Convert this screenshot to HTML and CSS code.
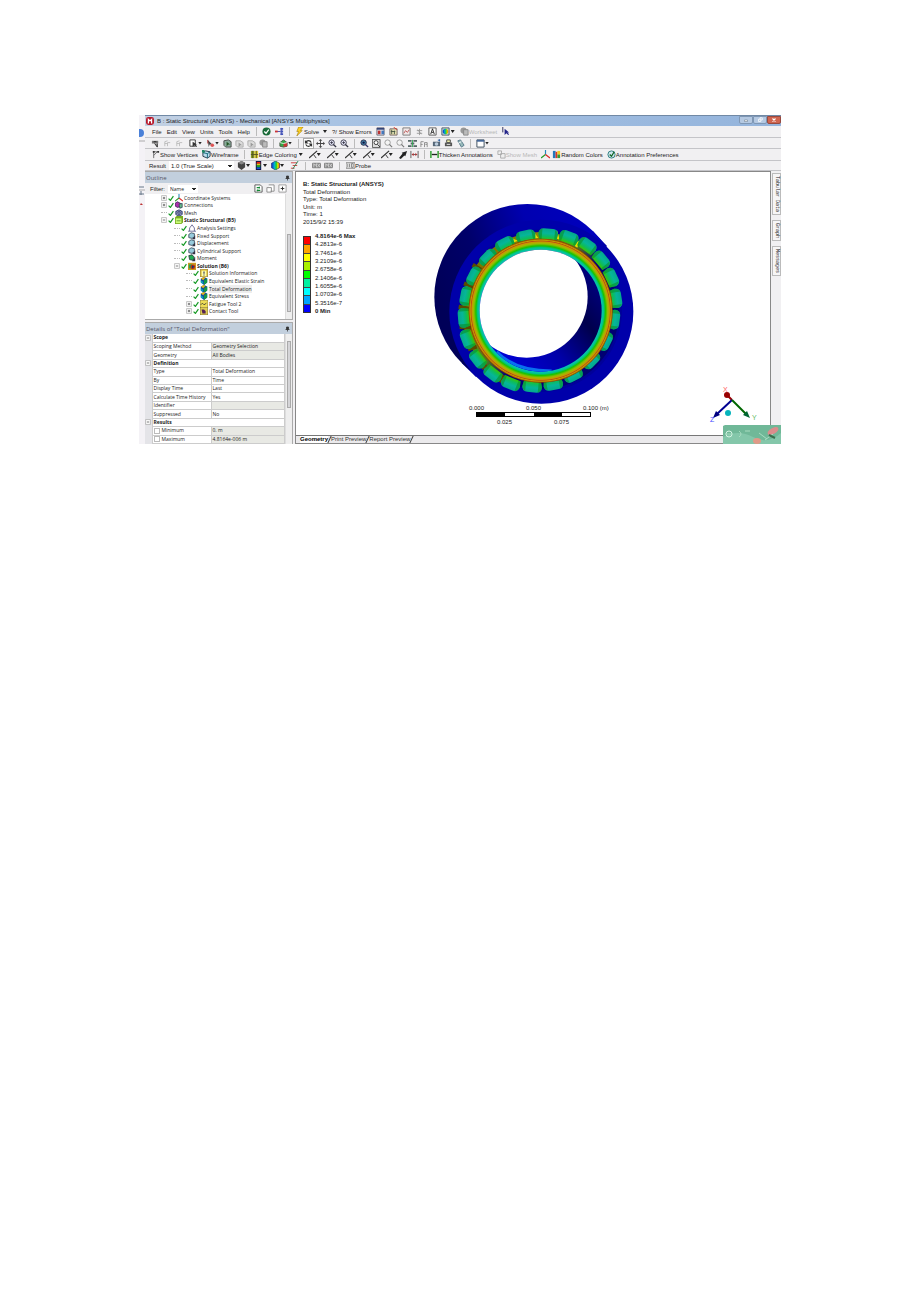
FILE: index.html
```html
<!DOCTYPE html>
<html lang="en">
<head>
<meta charset="utf-8">
<title>B : Static Structural (ANSYS) - Mechanical [ANSYS Multiphysics]</title>
<link rel="stylesheet" href="styles.css">
</head>
<body>
<svg class="defs" aria-hidden="true">
  <defs>
    <linearGradient id="rainbow" x1="0" x2="1"><stop offset="0" stop-color="#12c"/><stop offset=".4" stop-color="#0bc"/><stop offset=".6" stop-color="#2c2"/><stop offset=".8" stop-color="#ee0"/><stop offset="1" stop-color="#e20"/></linearGradient>
    <symbol id="i-tag" viewBox="0 0 10 10"><path d="M1 2h7v3H1z" fill="#777"/><path d="M3 3h3M4 5l3 4V5" stroke="#222" fill="#999"/></symbol>
    <symbol id="i-dim" viewBox="0 0 10 10"><path d="M2 8V3l3-1M5 8V4h3M2 5h3" stroke="#bbb" fill="none"/></symbol>
    <symbol id="i-select" viewBox="0 0 10 10"><path d="M1 1h6v7H1z" fill="#fff" stroke="#333"/><path d="M4 3v6l2-2 2 2 1-1-2-2h2z" fill="#333"/></symbol>
    <symbol id="i-pick" viewBox="0 0 10 10"><path d="M2 1l5 5-3 0-1 3z" fill="#444"/><circle cx="7" cy="7" r="2" fill="#d55"/><path d="M2 1v4" stroke="#a22"/></symbol>
    <symbol id="i-body" viewBox="0 0 10 10"><path d="M1 2l5-1 3 2v6H3L1 7z" fill="#8a9" stroke="#444"/><path d="M4 3v5l2-2h2z" fill="#252"/></symbol>
    <symbol id="i-body-off" viewBox="0 0 10 10"><path d="M1 2h5l3 2v5H3L1 7z" fill="#ddd" stroke="#aaa"/><path d="M4 4v5l2-2h2z" fill="#999"/></symbol>
    <symbol id="i-cubes" viewBox="0 0 10 10"><path d="M1 4l4-3 4 3v4L5 9 1 8z" fill="#3a4" stroke="#454"/><path d="M5 5l4-1v4L5 9z" fill="#c33"/><path d="M1 4l4 1 4-1" stroke="#eee" fill="none"/></symbol>
    <symbol id="i-rotate" viewBox="0 0 10 10"><path d="M8 4C7 1 3 1 2 4M2 6c1 3 5 3 6 0" fill="none" stroke="#333" stroke-width="1.3"/><path d="M1 1v4h4zM9 9V5H5z" fill="#333"/></symbol>
    <symbol id="i-pan" viewBox="0 0 10 10"><path d="M5 0l2 2H5.5v2.500H8V3l2 2-2 2V5.500H5.500V8H7l-2 2-2-2h1.500V5.500H2V7L0 5l2-2v1.500h2.500V2H3z" fill="#444"/></symbol>
    <symbol id="i-zoom" viewBox="0 0 10 10"><circle cx="4" cy="4" r="3" fill="#eef" stroke="#334"/><path d="M6 6l3 3" stroke="#334" stroke-width="1.500"/><path d="M2.500 4h3M4 2.500v3" stroke="#334"/></symbol>
    <symbol id="i-zoom-fit" viewBox="0 0 10 10"><circle cx="4" cy="4" r="3" fill="#48a" stroke="#224"/><circle cx="4" cy="4" r="1.300" fill="#114"/><path d="M6 6l3 3" stroke="#336" stroke-width="1.500"/></symbol>
    <symbol id="i-zoom-box" viewBox="0 0 10 10"><path d="M0 .5h9v9H.5V0" fill="#ddd" stroke="#555"/><circle cx="4.500" cy="4" r="2.200" fill="#fff" stroke="#333"/><path d="M6 6l3 3" stroke="#333"/></symbol>
    <symbol id="i-zoom-off" viewBox="0 0 10 10"><circle cx="4" cy="4" r="3" fill="#f4f4f4" stroke="#999"/><path d="M6 6l3 3" stroke="#777" stroke-width="1.300"/></symbol>
    <symbol id="i-iso" viewBox="0 0 10 10"><path d="M0 1h4v2H0zM6 1h4v2H6zM3 4h4v2H3zM0 7h4v2H0zM6 7h4v2H6z" fill="#566"/><path d="M5 1v8" stroke="#3a5"/></symbol>
    <symbol id="i-probe-f" viewBox="0 0 10 10"><path d="M1 9V3h3M1 6h2M5 9V4h3v2H6M8 6v3" stroke="#888" fill="none"/></symbol>
    <symbol id="i-camera" viewBox="0 0 10 10"><path d="M1 3h8v5H1z" fill="#567"/><circle cx="5" cy="5.500" r="2" fill="#bcd"/><path d="M6 1l3-1v3" fill="#36a"/></symbol>
    <symbol id="i-print" viewBox="0 0 10 10"><path d="M3 1h4v3H3z" fill="#efefaa" stroke="#444"/><path d="M1 4h8v4H1z" fill="#555"/><path d="M3 6h4" stroke="#eee"/></symbol>
    <symbol id="i-clip" viewBox="0 0 10 10"><path d="M2 2l3-1 4 6-3 2z" fill="#9bb" stroke="#578"/><path d="M2 5l4-2" stroke="#fff"/></symbol>
    <symbol id="i-window" viewBox="0 0 10 10"><path d="M1 1h8v8H1z" fill="#fff" stroke="#345"/><path d="M1 1h8v2H1z" fill="#469"/></symbol>
    <symbol id="i-ok" viewBox="0 0 10 10"><circle cx="5" cy="5" r="4.500" fill="#186a38"/><path d="M2.500 5l2 2 3-4" fill="none" stroke="#fff" stroke-width="1.400"/></symbol>
    <symbol id="i-link" viewBox="0 0 10 10"><path d="M0 5h6M7 1v8" stroke="#44a" fill="none"/><path d="M0 4h3v2H0z" fill="#c33"/><path d="M6 1h3v2H6zM6 4h3v2H6zM6 7h3v2H6z" fill="#45b"/></symbol>
    <symbol id="i-bolt" viewBox="0 0 10 10"><path d="M4 0h5L6 4h2L2 10l2-5H2z" fill="#ffd21c" stroke="#987000" stroke-width=".6"/></symbol>
    <symbol id="i-sheet" viewBox="0 0 10 10"><path d="M1 1h8v8H1z" fill="#e8e8f0" stroke="#667"/><path d="M1 1h8v2H1z" fill="#347"/><path d="M2 4h3v4H2z" fill="#b33"/><path d="M6 4h3v4H6z" fill="#47b"/></symbol>
    <symbol id="i-note" viewBox="0 0 10 10"><path d="M1 2h8v7H1z" fill="#e5e0b0" stroke="#766"/><path d="M2 5h5M3 3v5M6 4v4" stroke="#454"/><path d="M5 0l4 3" stroke="#d32"/></symbol>
    <symbol id="i-chart" viewBox="0 0 10 10"><path d="M1 1h8v8H1z" fill="#f0e8e8" stroke="#777"/><path d="M2 7l2-3 2 2 2-3" fill="none" stroke="#b55"/></symbol>
    <symbol id="i-gear" viewBox="0 0 10 10"><path d="M5 2v7M2 4h6M2 7h6M3 3l4 5" stroke="#999"/></symbol>
    <symbol id="i-a" viewBox="0 0 10 10"><path d="M1 1h8v8H1z" fill="#fff" stroke="#555"/><path d="M3 8l2-6 2 6M4 6h2" fill="none" stroke="#222"/></symbol>
    <symbol id="i-image" viewBox="0 0 10 10"><path d="M1 1h8v8H1z" fill="#cdd" stroke="#456"/><circle cx="5" cy="5" r="3" fill="url(#rainbow)"/></symbol>
    <symbol id="i-worksheet" viewBox="0 0 10 10"><circle cx="4" cy="4" r="3.500" fill="#999"/><path d="M4 3h5v6H4z" fill="#bbb" stroke="#888"/></symbol>
    <symbol id="i-cursor" viewBox="0 0 10 10"><path d="M2 0v6" stroke="#225"/><path d="M4 2v7l2-2 2 2 1-1-2-2h2z" fill="#228"/></symbol>
    <symbol id="i-vertex" viewBox="0 0 10 10"><path d="M3 9V2h5M3 6l4-4" fill="none" stroke="#666"/><path d="M2 1h2v2H2zM7 1h2v2H7z" fill="#333"/></symbol>
    <symbol id="i-wire" viewBox="0 0 10 10"><path d="M1 3l3-2 5 1v5L6 9 1 7z" fill="#bde" stroke="#234"/><path d="M1 3l5 1 3-2M6 4v5" fill="none" stroke="#167"/><path d="M0 0h3v3H0z" fill="#286"/></symbol>
    <symbol id="i-edge" viewBox="0 0 10 10"><path d="M1 1h4v8H1z" fill="#892"/><path d="M5 1h4v8H5z" fill="#dc3"/><path d="M1 5h8M3 1v8M7 1v8" stroke="#552"/></symbol>
    <symbol id="i-line" viewBox="0 0 10 10"><path d="M0 9L9 1" fill="none" stroke="#333" stroke-width="1.400"/><path d="M5 5l3 4" fill="none" stroke="#333"/></symbol>
    <symbol id="i-thick" viewBox="0 0 10 10"><path d="M0 9l4-5-1-1 6-2-2 6-1-1-4 4z" fill="#222"/></symbol>
    <symbol id="i-span" viewBox="0 0 10 10"><path d="M1 1v8M9 1v8M2 5h6" stroke="#555"/><path d="M2 5l2-2v4zM8 5L6 3v4z" fill="#b33"/></symbol>
    <symbol id="i-annot" viewBox="0 0 10 10"><path d="M1 1v8M9 1v8" stroke="#292" stroke-width="1.500"/><path d="M2 5h6" stroke="#222" stroke-width="1.500"/></symbol>
    <symbol id="i-mesh-off" viewBox="0 0 10 10"><path d="M1 1h4v4H1zM4 4h5v5H4z" fill="#eee" stroke="#aaa"/></symbol>
    <symbol id="i-axes" viewBox="0 0 10 10"><path d="M5 5V0" stroke="#28b" stroke-width="1.300"/><path d="M5 5L0 9" stroke="#292" stroke-width="1.300"/><path d="M5 5l5 4" stroke="#d22" stroke-width="1.300"/></symbol>
    <symbol id="i-random" viewBox="0 0 10 10"><path d="M1 1h3v8H1z" fill="#27b"/><path d="M4 2h2v7H4z" fill="#d32"/><path d="M6 1h3v4H6z" fill="#ec2"/><path d="M6 5h3v4H6z" fill="#393"/></symbol>
    <symbol id="i-pref" viewBox="0 0 10 10"><circle cx="5" cy="5" r="4" fill="#cfe6ef" stroke="#277"/><path d="M3 5l2 2 3-5" fill="none" stroke="#162" stroke-width="1.400"/></symbol>
    <symbol id="i-cube" viewBox="0 0 10 10"><path d="M5 0l4 2v5L5 10 1 7V2z" fill="#444"/><path d="M5 0l4 2-4 2-4-2z" fill="#888"/></symbol>
    <symbol id="i-bands" viewBox="0 0 10 10"><path d="M2 0h6v10H2z" fill="#114"/><path d="M3 1h4v2H3z" fill="#e21"/><path d="M3 3h4v2H3z" fill="#dc1"/><path d="M3 5h4v2H3z" fill="#1a3"/><path d="M3 7h4v2H3z" fill="#15c"/></symbol>
    <symbol id="i-contour" viewBox="0 0 10 10"><path d="M5 0l4.500 2.500v5L5 10 .5 7.500v-5z" fill="url(#rainbow)" stroke="#125" stroke-width=".6"/></symbol>
    <symbol id="i-vector" viewBox="0 0 10 10"><path d="M1 2h7M3 5h5M1 8h4" stroke="#c33"/><path d="M9 0L3 9" stroke="#285"/></symbol>
    <symbol id="i-max" viewBox="0 0 10 10"><rect y="2" width="10" height="6" rx="1" fill="#888"/><path d="M2 7V3l1.500 2L5 3v4M6 3l3 4M9 3L6 7" fill="none" stroke="#ddd" stroke-width=".8"/></symbol>
    <symbol id="i-probe" viewBox="0 0 10 10"><path d="M0 2h10v6H0z" fill="#fff" stroke="#777"/><path d="M2 3v4M4 3v4M6 3h2v4H6z" fill="none" stroke="#777"/></symbol>
    <symbol id="i-check" viewBox="0 0 10 10"><path d="M1 6l3 3L9 2" fill="none" stroke="#169a25" stroke-width="2"/></symbol>
    <symbol id="i-load" viewBox="0 0 10 10"><path d="M1 3l3-2 4 1v4L5 8 1 7z" fill="#9cd" stroke="#345"/><path d="M9 4L5 9h4z" fill="#334"/></symbol>
    <symbol id="i-moment" viewBox="0 0 10 10"><path d="M1 2l4-1 3 3-1 4-5-1z" fill="#2a5" stroke="#233"/><path d="M9 4L5 9h4z" fill="#334"/></symbol>
    <symbol id="i-connect" viewBox="0 0 10 10"><path d="M0 3l3-2 4 2v4L3 8 0 6z" fill="#a3a" stroke="#325"/><path d="M5 4l4-1v5L6 9z" fill="#6b8" stroke="#345"/></symbol>
    <symbol id="i-mesh" viewBox="0 0 10 10"><path d="M1 3l4-2 4 2v4L5 9 1 7z" fill="#aac" stroke="#236"/><path d="M1 3l4 2 4-2M5 5v4M1 5l4 2 4-2M3 2l4 2M7 2L3 4" fill="none" stroke="#236" stroke-width=".7"/></symbol>
    <symbol id="i-struct" viewBox="0 0 10 10"><path d="M0 2l2-2h8v8L8 10H0z" fill="#7a2"/><path d="M1 3h7v6H1z" fill="#cf7"/><path d="M2 6h5" stroke="#583"/></symbol>
    <symbol id="i-settings" viewBox="0 0 10 10"><path d="M2 9V5l3-4 3 4v4M0 9h10" fill="#fff" stroke="#558"/></symbol>
    <symbol id="i-solution" viewBox="0 0 10 10"><path d="M0 1h10v9H0z" fill="#c92"/><path d="M1 3h4v5H1z" fill="#2a5"/><circle cx="6" cy="6" r="3" fill="#b31"/><path d="M5 4l3 2-3 2z" fill="#137"/></symbol>
    <symbol id="i-info" viewBox="0 0 10 10"><path d="M0 1l2-1h8v9l-2 1H0z" fill="#db3" stroke="#875"/><path d="M2 2h6v7H2z" fill="#ffa"/><path d="M5 3v3M5 7v1" stroke="#225" stroke-width="1.300"/></symbol>
    <symbol id="i-result" viewBox="0 0 10 10"><path d="M5 0l4 2v5L5 10 1 7V2z" fill="#124a9c"/><path d="M5 4l4-2v5L5 10z" fill="#159a46"/><path d="M1 2l4-2 2 1-3 3z" fill="#e3b21a"/><path d="M1 4l3 2v3L1 7z" fill="#0aa0c0"/></symbol>
    <symbol id="i-fatigue" viewBox="0 0 10 10"><path d="M0 1l2-1h8v9l-2 1H0z" fill="#ed5" stroke="#874"/><path d="M1 6l2-2 2 2 3-2" stroke="#333" fill="none"/></symbol>
    <symbol id="i-contact" viewBox="0 0 10 10"><path d="M0 1l2-1h8v9l-2 1H0z" fill="#dc5" stroke="#763"/><path d="M2 3l3 0 2 2v3H3z" fill="#525"/></symbol>
    <symbol id="i-pin" viewBox="0 0 10 10"><path d="M3 1h4v5H3zM1 6h8M5 6v4" fill="#333" stroke="#333" stroke-width="1.500"/></symbol>
    <symbol id="i-refresh" viewBox="0 0 10 10"><path d="M1 1h6l2 2v6H1z" fill="#fff" stroke="#555"/><path d="M3 4h3M3 7h4M6 3v2M4 6v2" stroke="#183" stroke-width="1.300"/></symbol>
    <symbol id="i-filter" viewBox="0 0 10 10"><path d="M3 1h6v7H5M1 4h5v5H1z" fill="#fff" stroke="#888"/></symbol>
    <symbol id="i-plus" viewBox="0 0 10 10"><path d="M1 1h8v8H1z" fill="#fff" stroke="#999"/><path d="M3 5h4M5 3v4" stroke="#222"/></symbol>
    <symbol id="i-minus" viewBox="0 0 10 10"><path d="M1 1h8v8H1z" fill="#fff" stroke="#999"/><path d="M3 5h4" stroke="#222"/></symbol>
  </defs>
</svg>

<main class="sheet">
<div class="shot">
  <aside class="behind" aria-hidden="true">
    <svg viewBox="0 0 6 100"><circle cx="1" cy="18" r="4" fill="#4a80d8"/><path d="M0 26h6M0 75h6" stroke="#aaa"/><path d="M0 79h5M2 76v4M0 72h5" stroke="#678"/><path d="M1 90l1-2 2 2z" fill="#b33"/></svg>
  </aside>
  <div class="app">
    <header class="title">
      <svg class="logo" viewBox="0 0 10 10"><rect width="10" height="10" rx="3" fill="#b8182a"/><path d="M3 8V3l2 2 2-2v5" fill="none" stroke="#fff" stroke-width="1.500"/></svg>
      <h1>B : Static Structural (ANSYS) - Mechanical [ANSYS Multiphysics]</h1>
      <div class="controls">
        <button class="ctl" aria-label="Minimize"><svg viewBox="0 0 10 8"><path d="M3 4h4v2H3z" fill="#fff" stroke="#567" stroke-width=".6"/></svg></button>
        <button class="ctl" aria-label="Restore"><svg viewBox="0 0 10 8"><path d="M3 3h3v3H3zM5 3V1h3v3H6" fill="none" stroke="#fff"/></svg></button>
        <button class="ctl close" aria-label="Close"><svg viewBox="0 0 10 8"><path d="M3 2l4 4M7 2L3 6" stroke="#fff" stroke-width="1.500"/></svg></button>
      </div>
    </header>

    <nav class="bar menu">
      <button class="word">File</button><button class="word">Edit</button><button class="word">View</button><button class="word">Units</button><button class="word">Tools</button><button class="word">Help</button>
      <i class="sep"></i>
      <button aria-label="Ready"><svg><use href="#i-ok"/></svg></button>
      <button aria-label="Connect"><svg><use href="#i-link"/></svg></button>
      <i class="sep"></i>
      <button><svg><use href="#i-bolt"/></svg>Solve</button><button class="caret wide" aria-label="Solve options"></button>
      <button>?/ Show Errors</button>
      <button aria-label="Sheet"><svg><use href="#i-sheet"/></svg></button>
      <button aria-label="Comment"><svg><use href="#i-note"/></svg></button>
      <button aria-label="Chart"><svg><use href="#i-chart"/></svg></button>
      <button aria-label="Symbol"><svg><use href="#i-gear"/></svg></button>
      <button aria-label="Annotation"><svg><use href="#i-a"/></svg></button>
      <button aria-label="Image"><svg><use href="#i-image"/></svg></button><button class="caret" aria-label="Image options"></button>
      <button disabled><svg><use href="#i-worksheet"/></svg>Worksheet</button>
      <button aria-label="Pointer"><svg><use href="#i-cursor"/></svg></button>
    </nav>

    <div class="bar icons">
      <button aria-label="Label"><svg><use href="#i-tag"/></svg></button>
      <button aria-label="Direction"><svg><use href="#i-dim"/></svg></button>
      <button aria-label="Coordinates"><svg><use href="#i-dim"/></svg></button>
      <button class="apart" aria-label="Select mode"><svg><use href="#i-select"/></svg></button><button class="caret" aria-label="Select options"></button>
      <button aria-label="Pick"><svg><use href="#i-pick"/></svg></button><button class="caret" aria-label="Pick options"></button>
      <button aria-label="Vertex"><svg><use href="#i-body"/></svg></button>
      <button aria-label="Edge"><svg><use href="#i-body-off"/></svg></button>
      <button aria-label="Face"><svg><use href="#i-body-off"/></svg></button>
      <button aria-label="Body"><svg><use href="#i-worksheet"/></svg></button>
      <i class="sep"></i>
      <button aria-label="Extend"><svg><use href="#i-cubes"/></svg></button><button class="caret" aria-label="Extend options"></button>
      <i class="sep"></i>
      <button class="on" aria-label="Rotate"><svg><use href="#i-rotate"/></svg></button>
      <button aria-label="Pan"><svg><use href="#i-pan"/></svg></button>
      <button aria-label="Zoom"><svg><use href="#i-zoom"/></svg></button>
      <button aria-label="Box zoom"><svg><use href="#i-zoom"/></svg></button>
      <i class="sep"></i>
      <button aria-label="Fit"><svg><use href="#i-zoom-fit"/></svg></button>
      <button aria-label="Magnifier"><svg><use href="#i-zoom-box"/></svg></button>
      <button aria-label="Previous view"><svg><use href="#i-zoom-off"/></svg></button>
      <button aria-label="Next view"><svg><use href="#i-zoom-off"/></svg></button>
      <button aria-label="Isometric"><svg><use href="#i-iso"/></svg></button>
      <button aria-label="Look at"><svg><use href="#i-probe-f"/></svg></button>
      <button aria-label="Capture"><svg><use href="#i-camera"/></svg></button>
      <button aria-label="Print"><svg><use href="#i-print"/></svg></button>
      <button aria-label="Section plane"><svg><use href="#i-clip"/></svg></button>
      <i class="sep"></i>
      <button aria-label="Viewports"><svg><use href="#i-window"/></svg></button><button class="caret" aria-label="Viewport options"></button>
    </div>

    <div class="bar edges">
      <button><svg><use href="#i-vertex"/></svg>Show Vertices</button>
      <button class="apart"><svg><use href="#i-wire"/></svg>Wireframe</button>
      <i class="sep"></i>
      <button><svg><use href="#i-edge"/></svg>Edge Coloring</button><button class="caret wide" aria-label="Coloring options"></button>
      <button aria-label="Edge 0"><svg><use href="#i-line"/></svg></button><button class="caret" aria-label="Edge 0 options"></button>
      <button aria-label="Edge 1"><svg><use href="#i-line"/></svg></button><button class="caret" aria-label="Edge 1 options"></button>
      <button aria-label="Edge 2"><svg><use href="#i-line"/></svg></button><button class="caret" aria-label="Edge 2 options"></button>
      <button aria-label="Edge 3"><svg><use href="#i-line"/></svg></button><button class="caret" aria-label="Edge 3 options"></button>
      <button aria-label="Edge X"><svg><use href="#i-line"/></svg></button><button class="caret" aria-label="Edge X options"></button>
      <button aria-label="Edge direction"><svg><use href="#i-thick"/></svg></button>
      <button aria-label="Thicken edge"><svg><use href="#i-span"/></svg></button>
      <i class="sep"></i>
      <button><svg><use href="#i-annot"/></svg>Thicken Annotations</button>
      <button class="apart" disabled><svg><use href="#i-mesh-off"/></svg>Show Mesh</button>
      <button class="apart" aria-label="Axes"><svg><use href="#i-axes"/></svg></button>
      <button><svg><use href="#i-random"/></svg>Random Colors</button>
      <button class="apart"><svg><use href="#i-pref"/></svg>Annotation Preferences</button>
    </div>

    <div class="bar result">
      <label for="scale">Result</label>
      <select id="scale"><option>1.0 (True Scale)</option></select>
      <button aria-label="Geometry"><svg><use href="#i-cube"/></svg></button><button class="caret" aria-label="Geometry options"></button>
      <button aria-label="Contours"><svg><use href="#i-bands"/></svg></button><button class="caret" aria-label="Contour options"></button>
      <button aria-label="Edges"><svg><use href="#i-contour"/></svg></button><button class="caret" aria-label="Edges options"></button>
      <button class="apart" aria-label="Vectors"><svg><use href="#i-vector"/></svg></button>
      <i class="sep"></i>
      <button aria-label="Maximum"><svg><use href="#i-max"/></svg></button>
      <button aria-label="Minimum"><svg><use href="#i-max"/></svg></button>
      <i class="sep"></i>
      <button><svg><use href="#i-probe"/></svg>Probe</button>
    </div>

    <div class="work">
      <div class="left">
        <section class="panel">
          <h2><span>Outline</span><svg><use href="#i-pin"/></svg></h2>
          <div class="filter">
            <label for="filter">Filter:</label>
            <select id="filter"><option>Name</option></select>
            <button aria-label="Refresh"><svg><use href="#i-refresh"/></svg></button>
            <button aria-label="Clear"><svg><use href="#i-filter"/></svg></button>
            <button aria-label="Expand all"><svg><use href="#i-plus"/></svg></button>
          </div>
          <div class="scrolled">
            <ul class="tree">
              <li class="l1"><svg><use href="#i-plus"/></svg><svg><use href="#i-check"/></svg><svg class="ic"><use href="#i-axes"/></svg>Coordinate Systems</li>
              <li class="l1"><svg><use href="#i-plus"/></svg><svg><use href="#i-check"/></svg><svg class="ic"><use href="#i-connect"/></svg>Connections</li>
              <li class="l1"><i></i><svg><use href="#i-check"/></svg><svg class="ic"><use href="#i-mesh"/></svg>Mesh</li>
              <li class="l1 strong"><svg><use href="#i-minus"/></svg><svg><use href="#i-check"/></svg><svg class="ic"><use href="#i-struct"/></svg>Static Structural (B5)</li>
              <li class="l2"><i></i><svg><use href="#i-check"/></svg><svg class="ic"><use href="#i-settings"/></svg>Analysis Settings</li>
              <li class="l2"><i></i><svg><use href="#i-check"/></svg><svg class="ic"><use href="#i-load"/></svg>Fixed Support</li>
              <li class="l2"><i></i><svg><use href="#i-check"/></svg><svg class="ic"><use href="#i-load"/></svg>Displacement</li>
              <li class="l2"><i></i><svg><use href="#i-check"/></svg><svg class="ic"><use href="#i-load"/></svg>Cylindrical Support</li>
              <li class="l2"><i></i><svg><use href="#i-check"/></svg><svg class="ic"><use href="#i-moment"/></svg>Moment</li>
              <li class="l2 strong"><svg><use href="#i-minus"/></svg><svg><use href="#i-check"/></svg><svg class="ic"><use href="#i-solution"/></svg>Solution (B6)</li>
              <li class="l3"><i></i><svg><use href="#i-check"/></svg><svg class="ic"><use href="#i-info"/></svg>Solution Information</li>
              <li class="l3"><i></i><svg><use href="#i-check"/></svg><svg class="ic"><use href="#i-result"/></svg>Equivalent Elastic Strain</li>
              <li class="l3"><i></i><svg><use href="#i-check"/></svg><svg class="ic"><use href="#i-result"/></svg><span class="current">Total Deformation</span></li>
              <li class="l3"><i></i><svg><use href="#i-check"/></svg><svg class="ic"><use href="#i-result"/></svg>Equivalent Stress</li>
              <li class="l3"><svg><use href="#i-plus"/></svg><svg><use href="#i-check"/></svg><svg class="ic"><use href="#i-fatigue"/></svg>Fatigue Tool 2</li>
              <li class="l3"><svg><use href="#i-plus"/></svg><svg><use href="#i-check"/></svg><svg class="ic"><use href="#i-contact"/></svg>Contact Tool</li>
            </ul>
            <div class="scroll low"><b></b></div>
          </div>
        </section>

        <section class="panel details">
          <h2><span>Details of "Total Deformation"</span><svg><use href="#i-pin"/></svg></h2>
          <div class="scrolled">
            <table>
              <colgroup><col class="c-fold"><col class="c-name"><col></colgroup>
              <tr class="group"><td><svg><use href="#i-minus"/></svg></td><th colspan="2">Scope</th></tr>
              <tr><td></td><td>Scoping Method</td><td class="ro">Geometry Selection</td></tr>
              <tr><td></td><td>Geometry</td><td class="ro">All Bodies</td></tr>
              <tr class="group"><td><svg><use href="#i-minus"/></svg></td><th colspan="2">Definition</th></tr>
              <tr><td></td><td>Type</td><td>Total Deformation</td></tr>
              <tr><td></td><td>By</td><td>Time</td></tr>
              <tr><td></td><td>Display Time</td><td>Last</td></tr>
              <tr><td></td><td>Calculate Time History</td><td>Yes</td></tr>
              <tr><td></td><td>Identifier</td><td class="ro"></td></tr>
              <tr><td></td><td>Suppressed</td><td>No</td></tr>
              <tr class="group"><td><svg><use href="#i-minus"/></svg></td><th colspan="2">Results</th></tr>
              <tr><td></td><td><label><input type="checkbox">Minimum</label></td><td class="ro">0. m</td></tr>
              <tr><td></td><td><label><input type="checkbox">Maximum</label></td><td class="ro">4.8164e-006 m</td></tr>
            </table>
            <div class="scroll"><b></b></div>
          </div>
        </section>
      </div>

      <div class="center">
        <section class="view">
          <div class="caption">
            <strong>B: Static Structural (ANSYS)</strong>
            <span>Total Deformation</span>
            <span>Type: Total Deformation</span>
            <span>Unit: m</span>
            <span>Time: 1</span>
            <span>2015/9/2 15:39</span>
          </div>
          <div class="legend">
            <div class="ramp"><i class="k1"></i><i class="k2"></i><i class="k3"></i><i class="k4"></i><i class="k5"></i><i class="k6"></i><i class="k7"></i><i class="k8"></i><i class="k9"></i></div>
            <ol><li><strong>4.8164e-6 Max</strong></li><li>4.2813e-6</li><li>3.7461e-6</li><li>3.2109e-6</li><li>2.6758e-6</li><li>2.1406e-6</li><li>1.6055e-6</li><li>1.0703e-6</li><li>5.3516e-7</li><li><strong>0 Min</strong></li></ol>
          </div>

          <svg class="bearing" viewBox="0 0 660 645" role="img" aria-label="Bearing deformation plot">
            <defs>
              <linearGradient id="side" x1="0" y1=".45" x2="1" y2=".1"><stop offset="0" stop-color="#000058"/><stop offset=".25" stop-color="#00006a"/><stop offset=".55" stop-color="#0000b0"/><stop offset="1" stop-color="#0000c4"/></linearGradient>
              <linearGradient id="bore" x1=".1" y1="1" x2="1" y2=".3"><stop offset="0" stop-color="#0000e6"/><stop offset=".45" stop-color="#0000a8"/><stop offset=".75" stop-color="#00004c"/><stop offset="1" stop-color="#000080"/></linearGradient>
              <radialGradient id="race" gradientUnits="userSpaceOnUse" cx="347" cy="347" r="216">
                <stop offset=".845" stop-color="#0cc3b4"/><stop offset=".875" stop-color="#00c490"/><stop offset=".9" stop-color="#18c400"/><stop offset=".93" stop-color="#98bc00"/><stop offset=".955" stop-color="#c89800"/><stop offset=".968" stop-color="#b85010"/><stop offset=".978" stop-color="#c89c00"/><stop offset=".988" stop-color="#a87800"/><stop offset="1" stop-color="#982000"/>
              </radialGradient>
              <linearGradient id="gap" x1="0" y1="0" x2="1" y2=".8"><stop offset="0" stop-color="#606000"/><stop offset=".3" stop-color="#8c8800"/><stop offset=".5" stop-color="#507020"/><stop offset=".62" stop-color="#000078"/><stop offset="1" stop-color="#000070"/></linearGradient>
              <linearGradient id="roll" x1="0" y1="0" x2="0" y2="1"><stop offset="0" stop-color="#04a88c"/><stop offset=".4" stop-color="#06b59a"/><stop offset=".7" stop-color="#0cbc60"/><stop offset="1" stop-color="#3cc400"/></linearGradient>
              <g id="r"><path d="M-30 0Q-30-17-15-18H13Q27-18 29-3L25 17H-25Z" fill="url(#roll)"/><path d="M-30 0Q-30-15-19-17L-19 17H-25ZM29-3L25 17H19V-16Q27-12 29-3Z" fill="#089028" opacity=".6"/></g>
              <clipPath id="hole"><circle cx="347" cy="347" r="183"/></clipPath>
            </defs>
            <path d="M504 109L546 153L153 546L110 504Z" fill="#0000a4"/>
            <circle cx="307" cy="306" r="279" fill="url(#side)"/>
            <circle cx="349" cy="350" r="276" fill="#0000aa"/>
            <circle cx="347" cy="347" r="244" fill="#00009a"/>
            <circle cx="347" cy="347" r="236" fill="url(#gap)"/>
            <path d="M328 130l-6-25 18 24zM388 128l8-22 8 28zM443 149l22-15-8 24zM264 143l-5-14 20 8z" fill="#e5df00"/>
            <path d="M205 178l-16-13M168 224l-25-15M147 277l-30-12M135 342l-34-7M138 398l-34-2M155 455l-26 8M185 510l-15 10M235 540l-10 22" stroke="#584c00" stroke-width="12"/>
            <use href="#r" transform="translate(370 119) rotate(5)"/>
            <use href="#r" transform="translate(303 124) rotate(-12)"/>
            <use href="#r" transform="translate(240 147) rotate(-28)"/>
            <use href="#r" transform="translate(190 188) rotate(-45)"/>
            <use href="#r" transform="translate(148 243) rotate(-63)"/>
            <use href="#r" transform="translate(124 303) rotate(-79)"/>
            <use href="#r" transform="translate(117 368) rotate(-95)"/>
            <use href="#r" transform="translate(127 432) rotate(-111)"/>
            <use href="#r" transform="translate(158 492) rotate(-128)"/>
            <use href="#r" transform="translate(203 536) rotate(-143)"/>
            <use href="#r" transform="translate(257 565) rotate(-158)"/>
            <use href="#r" transform="translate(321 574) rotate(-174)"/>
            <use href="#r" transform="translate(384 567) rotate(170)"/>
            <use href="#r" transform="translate(444 540) rotate(153)"/>
            <use href="#r" transform="translate(498 496) rotate(135)"/>
            <use href="#r" transform="translate(540 439) rotate(116)"/>
            <use href="#r" transform="translate(566 374) rotate(97)"/>
            <use href="#r" transform="translate(572 311) rotate(81)"/>
            <use href="#r" transform="translate(559 248) rotate(65)"/>
            <use href="#r" transform="translate(529 195) rotate(50)"/>
            <use href="#r" transform="translate(487 152) rotate(36)"/>
            <use href="#r" transform="translate(432 128) rotate(21)"/>
            <circle cx="347" cy="347" r="216" fill="url(#race)"/>
            <circle cx="347" cy="347" r="183" fill="url(#bore)"/>
            <g clip-path="url(#hole)"><path d="M215 470Q270 528 380 528" fill="none" stroke="#0870f0" stroke-width="9"/><circle cx="305" cy="305" r="183" fill="#fff"/></g>
          </svg>

          <div class="ruler">
            <div class="ends"><span>0.000</span><span>0.050</span><span>0.100 (m)</span></div>
            <div class="stripes"><i></i><i></i><i></i><i></i></div>
            <div class="mids"><span>0.025</span><span>0.075</span></div>
          </div>

          <svg class="triad" viewBox="0 0 52 42" role="img" aria-label="Axis triad">
            <path d="M24 16l-6-6" stroke="#900" stroke-width="2"/><circle cx="19" cy="11" r="3" fill="#900"/>
            <path d="M24 16L9 30" stroke="#000090" stroke-width="2"/><path d="M5 34l3-7 4 4z" fill="#000080"/>
            <path d="M24 16l14 14" stroke="#060" stroke-width="2"/><path d="M42 34l-3-7-4 4z" fill="#063"/>
            <circle cx="20" cy="29" r="3" fill="#06b4bc"/>
            <text x="15" y="8" fill="#f66">X</text><text x="2" y="38" fill="#44f">Z</text><text x="44" y="36" fill="#6b6">Y</text>
          </svg>
        </section>
        <nav class="tabs"><a href="#" class="current">Geometry</a><a href="#">Print Preview</a><a href="#">Report Preview</a></nav>
      </div>

      <nav class="rail"><button>Tabular Data</button><button>Graph</button><button>Messages</button></nav>
    </div>

    <div class="ime">
      <svg viewBox="0 0 58 19"><path d="M0 1l2-1h56v19H0z" fill="#70b898"/><path d="M0 12q15-8 30 0t28-4v11H0z" fill="#84c7aa"/><ellipse cx="50" cy="6" rx="6" ry="3" fill="#dc8c8c" transform="rotate(-30 50 6)"/><ellipse cx="34" cy="16" rx="4" ry="3" fill="#e09a88"/><circle cx="6" cy="9" r="3" fill="none" stroke="#d4f4e4"/><path d="M2 9h8M16 6q4 3 0 6M22 6h5M36 8l8 6M42 15l8-6" stroke="#a8dcc0" fill="none"/><path d="M46 10l6 3" stroke="#386e4c" stroke-width="2"/></svg>
    </div>
  </div>
</div>
</main>
</body>
</html>
```

FILE: styles.css
```css
* { box-sizing: border-box; }

body {
  margin: 0;
  background: #fff;
  color: #222;
  font: 6px/8px "Liberation Sans", Arial, sans-serif;
}

button, select, input { margin: 0; padding: 0; border: 0; background: none; color: inherit; font: inherit; }
ul, ol, h1, h2 { margin: 0; padding: 0; list-style: none; font: inherit; }
.defs { position: absolute; width: 0; height: 0; }

select {
  appearance: none;
  background:
    linear-gradient(45deg, transparent 50%, #222 50%) right 4px center / 2px 2px no-repeat,
    linear-gradient(-45deg, transparent 50%, #222 50%) right 2px center / 2px 2px no-repeat,
    #fff;
}

.sheet { padding: 115px 139px; }
.shot { display: flex; }
.behind { flex: none; width: 6px; background: #f4f2f6; }
.behind svg { display: block; width: 6px; }
.app { position: relative; flex: 1; min-width: 0; background: #f1f0f2; }

/* Title bar */
.title {
  display: flex;
  align-items: center;
  gap: 3px;
  height: 11px;
  padding-left: 1px;
  border-top: 1px solid #7189a5;
  background: linear-gradient(90deg, #c3d1e3, #a9c3e3 30%, #94b4dc);
}
.title h1 { flex: 1; white-space: nowrap; }
.logo { width: 8px; height: 8px; }
.controls { display: flex; align-self: flex-start; }
.ctl { width: 14px; height: 8px; border: 1px solid #7f97b4; border-radius: 0 0 2px 2px; background: #b5c9e2; }
.ctl svg { display: block; width: 100%; height: 6px; }
.close { background: #d0644e; border-color: #974a40; }

/* Toolbars */
.bar {
  display: flex;
  align-items: center;
  gap: 3px;
  height: 12px;
  padding-left: 6px;
  border-bottom: 1px solid #c4c4c8;
  white-space: nowrap;
}
.bar button { display: flex; align-items: center; }
.bar svg { width: 9px; height: 9px; }
.bar button:disabled { color: #b8b8b8; }
.bar .caret { width: 4px; height: 3px; margin: 0 1px 0 -3px; background: #222; clip-path: polygon(0 0, 100% 0, 50% 100%); }
.bar .sep { width: 1px; height: 9px; margin: 0 2px; background: #bbb; }
.bar .apart { margin-left: 2px; }
.menu { gap: 4px; padding-left: 7px; }
.menu .word { margin-right: 1px; }
.menu .sep { margin: 0 1px; }
.bar .wide { margin-left: 0; }
.icons { height: 11px; }
.icons .on { outline: 1px solid #aaa; background: #fff; }
.edges { gap: 2px; }
.edges .caret { margin-right: 4px; }
.edges .sep { margin: 0 3px; }
.result { height: 10px; padding-left: 4px; }
.result select { width: 65px; height: 9px; padding: 0 2px; }
.result .sep { height: 8px; margin: 0 3px; }

/* Work area */
.work { display: grid; grid-template-columns: 149px 1fr 9px; gap: 1px; }
.left { display: flex; flex-direction: column; gap: 2px; font-family: "Open Sans", sans-serif; font-size: 5px; }
.panel { border: 1px solid #aaa; border-left: 0; background: #fff; margin-right: 1px; }
.panel h2 { display: flex; justify-content: space-between; align-items: center; height: 11px; padding: 0 2px 0 1px; background: #c2cfdd; color: #556; font-size: 6px; }
.panel h2 svg { width: 5px; height: 6px; }
.filter { display: flex; align-items: center; height: 11px; padding: 0 5px; gap: 3px; background: #f0eff1; font-size: 6px; }
.filter label { font: 6px "Liberation Sans", sans-serif; }
.filter select { width: 30px; padding: 0 2px; margin: 0 auto 0 0; font-size: 5px; }
.filter svg { display: block; width: 9px; height: 9px; }
.scrolled { display: flex; }
.scroll { flex: none; display: flex; flex-direction: column; width: 7px; padding: 7px 1px; background: #eee; border-left: 1px solid #ddd; }
.scroll b { height: 70%; border: 1px solid #aaa; background: #d5d5d8; }
.low { justify-content: flex-end; }

.tree { flex: 1; display: flex; flex-direction: column; height: 125px; padding: 0 0 4px; }
.tree li { flex: 1; display: flex; align-items: center; gap: 1px; min-height: 0; white-space: nowrap; }
.tree svg, .tree i { flex: none; width: 6px; height: 6px; }
.tree i { height: 1px; border-top: 1px dotted #bbb; }
.tree .ic { width: 8px; height: 8px; }
.tree .l1 { padding-left: 16px; }
.tree .l2 { padding-left: 29px; }
.tree .l3 { padding-left: 41px; }
.tree .current { background: #eee; }
.strong { font-weight: bold; }

.details table { flex: 1; height: 110px; border-collapse: collapse; table-layout: fixed; }
.c-fold { width: 7px; }
.c-name { width: 59px; }
.details td, .details th { height: 8px; padding: 0 0 0 1px; border-bottom: 1px solid #ccc; border-right: 1px solid #ccc; line-height: 7px; text-align: left; white-space: nowrap; }
.details td:first-child { padding: 0; background: #e4e4e8; border-bottom: 0; }
.details td svg { display: block; width: 6px; height: 6px; }
.details .ro { background: #e8e9e4; }
.details label { display: flex; align-items: center; gap: 2px; }
.details input { appearance: none; width: 6px; height: 6px; border: 1px solid #bbb; background: #fff; }
.details { border-bottom: 0; }

/* Graphics view */
.center { display: flex; flex-direction: column; min-width: 0; border: 1px solid #888; border-width: 1px 1px 0; background: #fff; }
.view { position: relative; flex: 1; padding: 8px 7px; overflow: hidden; }
.caption { display: flex; flex-direction: column; justify-content: space-between; height: 45px; }
.caption > * { line-height: 8px; margin-bottom: -1px; }
.legend { display: flex; gap: 4px; margin-top: 7px; }
.ramp { display: flex; flex-direction: column; width: 8px; height: 77px; margin-top: 4px; border: 1px solid #333; }
.ramp i { flex: 1; border-bottom: 1px solid #444; }
.ramp i:last-child { border: 0; }
.k1 { background: #f00; } .k2 { background: #ffa500; } .k3 { background: #ff0; }
.k4 { background: #a8f000; } .k5 { background: #0f0; } .k6 { background: #00f0a0; }
.k7 { background: #0ff; } .k8 { background: #00a5ff; } .k9 { background: #00f; }
.legend ol { display: flex; flex-direction: column; justify-content: space-between; height: 83px; }

.bearing { position: absolute; top: 23px; left: 129px; width: 220px; height: 215px; }
.ruler { position: absolute; left: 173px; bottom: 9px; width: 132px; font-size: 6px; line-height: 7px; }
.ends { display: grid; grid-template-columns: 57px 57px 1fr; white-space: nowrap; }
.stripes { display: flex; width: 115px; height: 5px; margin-left: 7px; border: 1px solid #000; }
.stripes i { flex: 1; }
.stripes i:nth-child(odd) { background: #000; }
.mids { display: grid; grid-template-columns: 57px 57px; margin: 2px 0 0 28px; }
.triad { position: absolute; right: 10px; bottom: 9px; width: 52px; height: 42px; font: 7px "Liberation Sans", sans-serif; }

.tabs { display: flex; gap: 3px; height: 9px; padding-left: 4px; border-top: 1px solid #777; border-bottom: 1px solid #888; background: #ebeaec; font-size: 6px; line-height: 7px; }
.tabs a { position: relative; color: #333; text-decoration: none; white-space: nowrap; }
.tabs a::after { content: ""; position: absolute; top: 0; right: -2px; width: 1px; height: 7px; background: #333; transform: skewX(-25deg); }
.tabs .current { background: #fff; color: #000; font-weight: bold; }

.rail { display: flex; flex-direction: column; gap: 5px; padding: 2px 0 0; }
.rail button { width: 9px; padding: 2px 0; border: 1px solid #bbb; background: #f6f5f6; font: 5px/7px "Liberation Mono", monospace; writing-mode: vertical-rl; }

/* Floating input-method bar */
.ime { position: absolute; right: 0; bottom: 0; width: 58px; height: 19px; }
.ime svg { display: block; width: 100%; height: 100%; }
```
